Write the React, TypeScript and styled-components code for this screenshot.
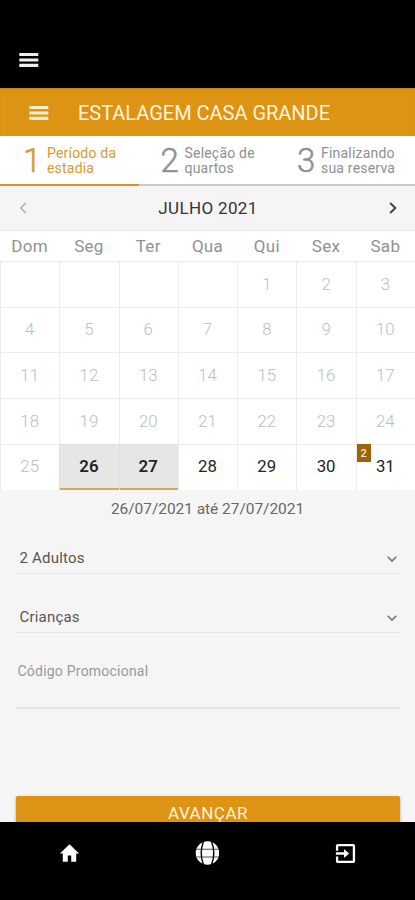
import React from "react";
import styled, { createGlobalStyle } from "styled-components";

const GlobalStyle = createGlobalStyle`
  * { box-sizing: border-box; }
  body { margin: 0; background: #000; font-family: Roboto, sans-serif; }
  button { font: inherit; border: 0; padding: 0; background: none; }
`;

const Screen = styled.div`
  width: 415px;
  height: 900px;
  display: flex;
  flex-direction: column;
  overflow: hidden;
  background: #000;
`;

const TopBar = styled.div`
  height: 88px;
  flex: none;
  padding: 53px 0 0 19px;
`;

const MenuButton = styled.button`
  display: block;
  width: 20px;
  height: 14px;
  svg { display: block; }
`;

const Content = styled.main`
  height: 734px;
  flex: none;
  display: flex;
  flex-direction: column;
  overflow: hidden;
  background: #f5f5f5;
`;

const Header = styled.header`
  height: 48px;
  flex: none;
  display: flex;
  align-items: center;
  padding: 1px 0 0 28.5px;
  gap: 29.5px;
  background: #dd9314;
  box-shadow: inset 0 1px 1px #c58317;
`;

const Title = styled.h1`
  margin: 0;
  font-size: 20px;
  font-weight: 400;
  line-height: 24px;
  letter-spacing: -0.02px;
  white-space: nowrap;
  color: #fff3da;
`;

const Steps = styled.nav`
  height: 50px;
  flex: none;
  display: grid;
  grid-template-columns: 139px 136px 140px;
  background: #fff;
`;

const Step = styled.div<{ $active?: boolean; $indent: number }>`
  display: flex;
  padding: 8px 0 0 ${(p) => p.$indent}px;
  color: ${(p) => (p.$active ? "#d99a2d" : "#8f8f8f")};
  border-bottom: 2px solid ${(p) => (p.$active ? "#d79422" : "#cacaca")};
`;

const StepNumber = styled.span`
  width: 24px;
  flex: none;
  font-size: 33px;
  font-weight: 300;
  line-height: 33px;
  -webkit-text-stroke: 0.5px currentColor;
`;

const StepLabel = styled.span`
  padding-top: 2px;
  font-size: 14px;
  line-height: 14.5px;
  letter-spacing: 0.2px;
  white-space: nowrap;
`;

const MonthBar = styled.div`
  height: 45px;
  flex: none;
  display: flex;
  align-items: center;
  justify-content: space-between;
  padding: 0 17px 0 18px;
  border-bottom: 1px solid #e9e9e9;
`;

const MonthName = styled.h2`
  margin: 0;
  font-size: 17px;
  font-weight: 400;
  line-height: 20px;
  letter-spacing: 0.35px;
  color: #333;
`;

const ArrowButton = styled.button`
  width: 11px;
  height: 14px;
  svg { display: block; }
`;

const Weekdays = styled.div`
  height: 30px;
  flex: none;
  display: grid;
  grid-template-columns: repeat(7, 1fr);
  line-height: 31px;
  font-size: 17px;
  letter-spacing: 0.3px;
  text-align: center;
  color: #919191;
  background: #fff;
`;

const Calendar = styled.div`
  height: 228.5px;
  flex: none;
  display: grid;
  grid-template-columns: repeat(7, 1fr);
  grid-template-rows: repeat(5, 1fr);
  background: #fff;
`;

type DayState = "past" | "open" | "selected";

const Day = styled.div<{ $state: DayState }>`
  position: relative;
  display: flex;
  align-items: center;
  justify-content: center;
  padding: 0 1px 1.5px 0;
  border-top: 1px solid #ececec;
  border-left: 1px solid #ececec;
  font-size: 16.8px;
  font-weight: ${(p) => (p.$state === "selected" ? 600 : p.$state === "open" ? 400 : 300)};
  color: ${(p) => (p.$state === "past" ? "#bdbdbd" : "#242424")};
  background: ${(p) => (p.$state === "selected" ? "#e6e6e6" : "#fff")};
  box-shadow: ${(p) => (p.$state === "selected" ? "inset 0 -2px #dda94a, -1px 0 #dda94a" : "none")};
  ${(p) => p.$state === "selected" && "border-color: #dfdfdf; box-shadow: inset 0 -2px #dda94a;"}
`;

const Badge = styled.span`
  position: absolute;
  top: -1px;
  left: 0;
  width: 14px;
  height: 18px;
  font-size: 11px;
  font-weight: 500;
  line-height: 19px;
  text-align: center;
  color: #ffe9bd;
  background: #9b630b;
`;

const Period = styled.p`
  height: 43.5px;
  flex: none;
  margin: 0;
  padding-top: 9.5px;
  font-size: 15.5px;
  line-height: 20px;
  letter-spacing: -0.05px;
  text-align: center;
  color: #686868;
`;

const Form = styled.form`
  flex: none;
  display: flex;
  flex-direction: column;
  padding: 0 15px 0 16px;
`;

const Select = styled.div<{ $height: number }>`
  height: ${(p) => p.$height}px;
  display: flex;
  align-items: flex-end;
  justify-content: space-between;
  padding: 0 2px 5px 3.5px;
  border-bottom: 1px solid #e6e6e6;
  font-size: 15px;
  line-height: 20px;
  letter-spacing: 0.2px;
  color: #555;
  svg { display: block; margin-bottom: 5px; }
`;

const Promo = styled.label`
  height: 76px;
  padding: 28px 0 0 1.5px;
  border-bottom: 2px solid #e4e4e4;
  font-size: 14px;
  line-height: 20px;
  letter-spacing: 0.22px;
  color: #999;
`;

const Submit = styled.button`
  height: 36px;
  flex: none;
  margin-top: 87px;
  padding-bottom: 2px;
  border-radius: 2px;
  font-size: 17px;
  line-height: 34px;
  letter-spacing: 0.5px;
  color: #fff3da;
  background: #dd9314;
  box-shadow: 0 1px 3px rgba(0, 0, 0, 0.35);
`;

const BottomBar = styled.nav`
  height: 78px;
  flex: none;
  display: grid;
  grid-template-columns: repeat(3, 1fr);
  background: #000;
`;

const Tab = styled.button`
  display: flex;
  justify-content: center;
  align-items: center;
  height: 62px;
`;

const MenuIcon = ({ color }: { color: string }) => (
  <svg width="20" height="14" viewBox="0 0 20 14" fill={color}>
    <path d="M.3 0h19v3.1H.3zM.3 5.4h19v3.1H.3zM.3 10.8h19v3.1H.3z" />
  </svg>
);

const Arrow = ({ next }: { next?: boolean }) => (
  <svg width="11" height="14" viewBox="0 0 11 14" fill="none" stroke={next ? "#3b3b3b" : "#aaa"} strokeWidth={next ? 1.8 : 1.5}>
    <path d={next ? "M3.2 2 8.4 7l-5.2 5" : "M8 2 2.8 7l5.2 5"} />
  </svg>
);

const Chevron = () => (
  <svg width="12" height="8" viewBox="0 0 12 8" fill="none" stroke="#777" strokeWidth="1.6">
    <path d="M1.7 1.7 6 6l4.3-4.3" />
  </svg>
);

const HomeIcon = () => (
  <svg width="24" height="24" viewBox="0 0 24 24" fill="#fff">
    <path d="M10.8 20.7v-6.2h3.4v6.2h5v-8.2h2.9L12.5 3.2l-9.6 9.3h2.9v8.2z" />
  </svg>
);

const GlobeIcon = () => (
  <svg width="24" height="24" viewBox="0 0 24 24">
    <circle cx="12.5" cy="12" r="11.8" fill="#fff" />
    <g fill="none">
      <path d="M.7 8.3h23.6M.7 16h23.6" stroke="#555" strokeWidth="1.1" />
      <path d="M8.6 0Q3.8 12 8.6 24M16.4 0q4.8 12 0 24" stroke="#000" strokeWidth="1.4" />
    </g>
  </svg>
);

const ExitIcon = () => (
  <svg width="23" height="23" viewBox="0 0 24 24" fill="#fff">
    <path d="M10.4 16.8 15.8 12l-5.4-4.8v3.5H2v2.6h8.4zM20 2H4c-1.1 0-2 .9-2 2v5h2.4V4.4h15.2v15.2H4.4V15H2v5c0 1.1.9 2 2 2h16c1.1 0 2-.9 2-2V4c0-1.1-.9-2-2-2z" />
  </svg>
);

const weekdays = ["Dom", "Seg", "Ter", "Qua", "Qui", "Sex", "Sab"];
const cells = Array.from({ length: 35 }, (_, i) => (i < 4 ? null : i - 3));

const dayState = (day: number | null): DayState => {
  if (day === 26 || day === 27) return "selected";
  return day !== null && day > 27 ? "open" : "past";
};

export default function App() {
  return (
    <Screen>
      <GlobalStyle />
      <TopBar>
        <MenuButton aria-label="Menu"><MenuIcon color="#eee" /></MenuButton>
      </TopBar>
      <Content>
        <Header>
          <MenuButton aria-label="Menu"><MenuIcon color="#ffefcf" /></MenuButton>
          <Title>ESTALAGEM CASA GRANDE</Title>
        </Header>
        <Steps>
          <Step $active $indent={23}>
            <StepNumber>1</StepNumber>
            <StepLabel>Período da<br />estadia</StepLabel>
          </Step>
          <Step $indent={21.5}>
            <StepNumber>2</StepNumber>
            <StepLabel>Seleção de<br />quartos</StepLabel>
          </Step>
          <Step $indent={22}>
            <StepNumber>3</StepNumber>
            <StepLabel>Finalizando<br />sua reserva</StepLabel>
          </Step>
        </Steps>
        <MonthBar>
          <ArrowButton aria-label="Mês anterior"><Arrow /></ArrowButton>
          <MonthName>JULHO 2021</MonthName>
          <ArrowButton aria-label="Próximo mês"><Arrow next /></ArrowButton>
        </MonthBar>
        <Weekdays>
          {weekdays.map((name) => <span key={name}>{name}</span>)}
        </Weekdays>
        <Calendar>
          {cells.map((day, i) => (
            <Day key={i} $state={dayState(day)}>
              {day}
              {day === 31 && <Badge>2</Badge>}
            </Day>
          ))}
        </Calendar>
        <Period>26/07/2021 até 27/07/2021</Period>
        <Form>
          <Select $height={41}>2 Adultos<Chevron /></Select>
          <Select $height={59}>Crianças<Chevron /></Select>
          <Promo>Código Promocional</Promo>
          <Submit type="button">AVANÇAR</Submit>
        </Form>
      </Content>
      <BottomBar>
        <Tab aria-label="Início"><HomeIcon /></Tab>
        <Tab aria-label="Idioma"><GlobeIcon /></Tab>
        <Tab aria-label="Sair"><ExitIcon /></Tab>
      </BottomBar>
    </Screen>
  );
}
